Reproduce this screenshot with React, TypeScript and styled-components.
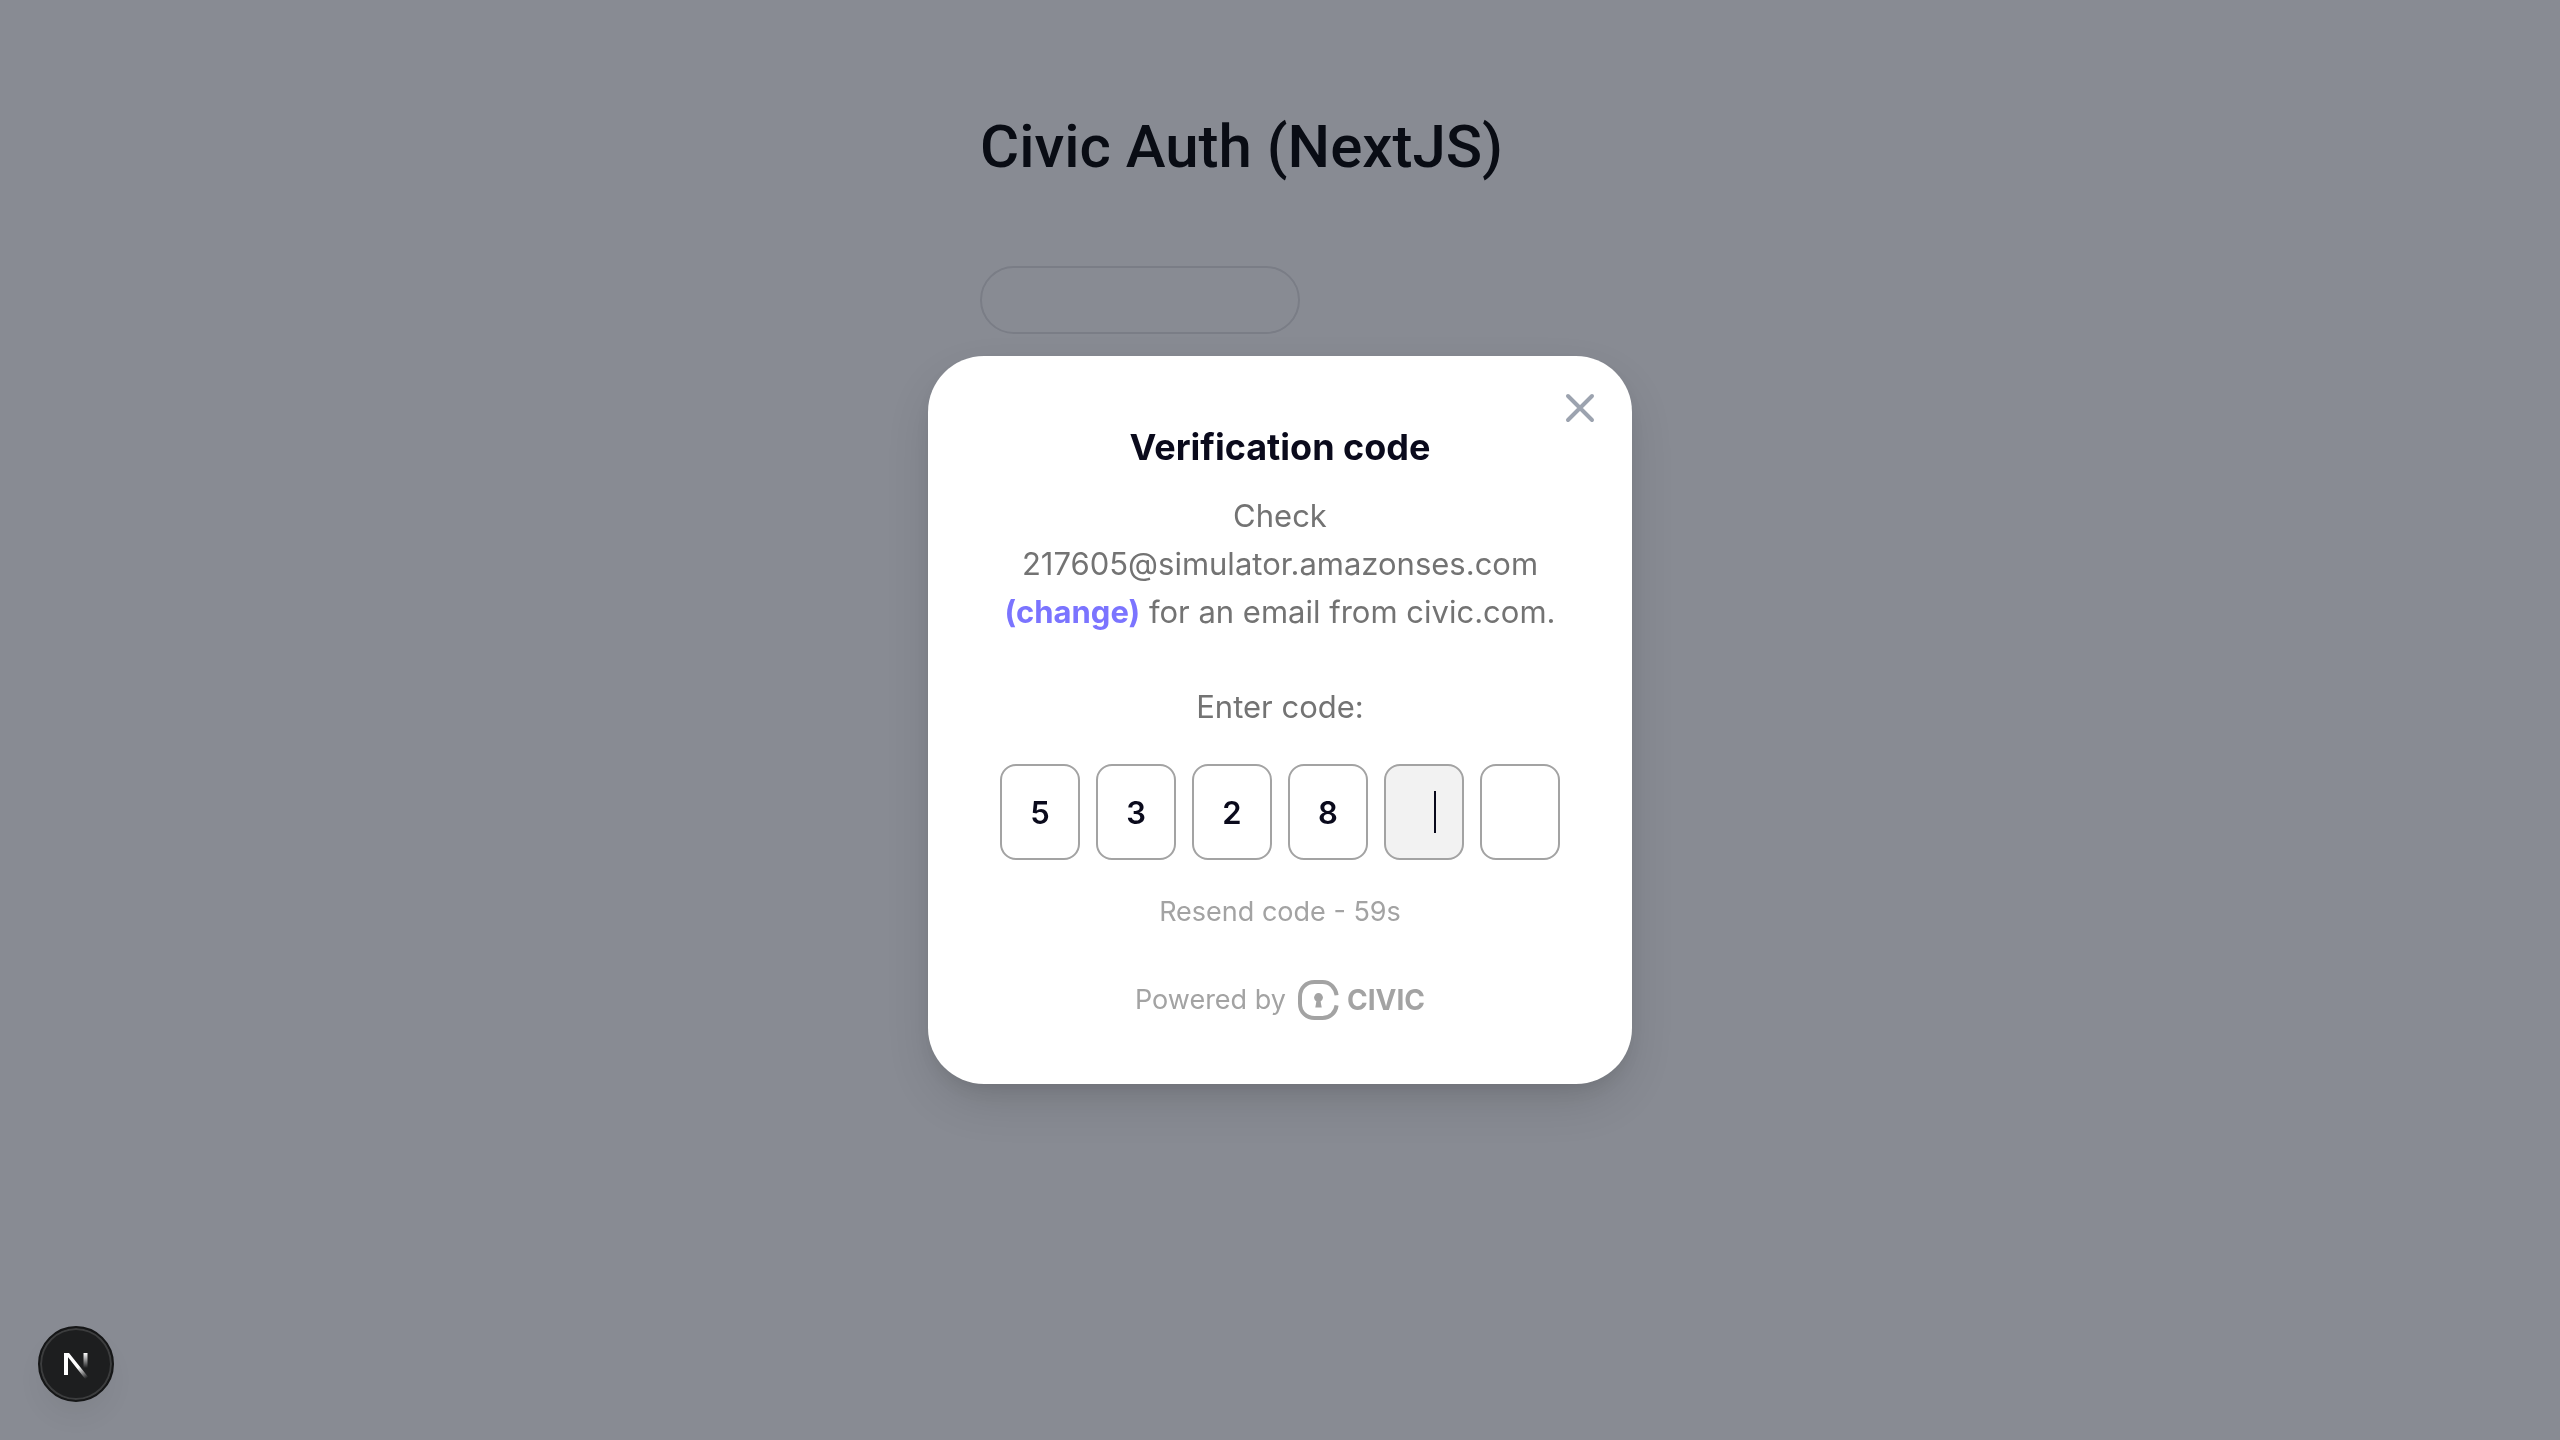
import React, { useState } from "react";
import styled, { createGlobalStyle } from "styled-components";

const GlobalStyle = createGlobalStyle`
  *, *::before, *::after { box-sizing: border-box; }
  html, body { margin: 0; background: #fff; }
  body, button, input {
    font-family: Inter, "Liberation Sans", Arial, sans-serif;
    -webkit-font-smoothing: antialiased;
  }
`;

const Page = styled.main`
  width: 100%;
  max-width: 600px;
  min-height: 100vh;
  margin: 0 auto;
  padding-top: 106px;
`;

const Heading = styled.h1`
  margin: 0 0 78px;
  font-family: Roboto, "Liberation Sans", sans-serif;
  font-size: 60px;
  line-height: 82px;
  font-weight: 500;
  color: #000;
  white-space: nowrap;
`;

const AuthButton = styled.button`
  display: block;
  width: 320px;
  height: 68px;
  border: 2px solid #e2e2e4;
  border-radius: 34px;
  background: transparent;
`;

const Scrim = styled.div`
  position: fixed;
  inset: 0;
  display: flex;
  align-items: center;
  justify-content: center;
  background: rgba(17, 24, 39, 0.5);
`;

const Card = styled.section`
  position: relative;
  width: 100%;
  max-width: 704px;
  padding: 64px 72px;
  display: flex;
  flex-direction: column;
  align-items: center;
  border-radius: 56px;
  background: #fff;
  box-shadow: 0 20px 50px -8px rgba(0, 0, 0, 0.16), 0 8px 20px -8px rgba(0, 0, 0, 0.12);
`;

const CloseButton = styled.button`
  position: absolute;
  top: 28px;
  right: 28px;
  width: 48px;
  height: 48px;
  padding: 0;
  border: 0;
  background: none;
  color: #9ca3af;
  svg { display: block; }
`;

const Title = styled.h2`
  margin: 0 0 18px;
  font-size: 36px;
  line-height: 54px;
  font-weight: 700;
  color: #0a0a1c;
`;

const Message = styled.p`
  margin: 0 0 46px;
  font-size: 31px;
  line-height: 48px;
  color: #737373;
  text-align: center;
`;

const ChangeLink = styled.a`
  color: #7b74ff;
  font-weight: 700;
  text-decoration: none;
`;

const CodeForm = styled.form`
  display: flex;
  flex-direction: column;
  align-items: center;
  gap: 32px;
`;

const CodeFields = styled.fieldset`
  margin: 0;
  padding: 0;
  border: 0;
  min-width: 0;
  display: flex;
  gap: 16px;
`;

const CodeLabel = styled.label`
  font-size: 31px;
  line-height: 50px;
  color: #737373;
`;

const Slot = styled.div`
  position: relative;
`;

const Digit = styled.input<{ $active: boolean }>`
  display: block;
  width: 80px;
  height: 96px;
  padding: 0;
  border: 2px solid #a3a3a3;
  border-radius: 16px;
  outline: none;
  background: ${(p) => (p.$active ? "#f2f2f2" : "#fff")};
  color: #0a0a1c;
  font-size: 31px;
  font-weight: 600;
  text-align: center;
  caret-color: transparent;
`;

const Caret = styled.span`
  position: absolute;
  top: 27px;
  left: 50px;
  width: 2px;
  height: 42px;
  background: #0a0a1c;
  pointer-events: none;
`;

const Resend = styled.button`
  padding: 0;
  border: 0;
  background: none;
  color: #a3a3a3;
  font-size: 27px;
  line-height: 40px;
`;

const Powered = styled.footer`
  margin-top: 48px;
  height: 40px;
  display: flex;
  align-items: center;
  font-size: 27px;
  line-height: 40px;
  color: #a3a3a3;
`;

const Brand = styled.span`
  margin-left: 12px;
  display: flex;
  align-items: center;
  gap: 8px;
  font-size: 28px;
  font-weight: 700;
  svg { display: block; }
`;

const DevBadge = styled.button`
  position: fixed;
  left: 38px;
  bottom: 38px;
  width: 76px;
  height: 76px;
  padding: 0;
  display: flex;
  align-items: center;
  justify-content: center;
  border: 2px solid #151617;
  border-radius: 50%;
  background: #1d1e1f;
  box-shadow: inset 0 0 0 2px #3c3d3e, 0 16px 32px -8px rgba(0, 0, 0, 0.08);
`;

function CloseIcon() {
  return (
    <svg width="48" height="48" viewBox="0 0 48 48" fill="none" stroke="currentColor" strokeWidth="4" strokeLinecap="round">
      <path d="M12 12 36 36M36 12 12 36" />
    </svg>
  );
}

function CivicMark() {
  return (
    <svg width="41" height="40" viewBox="0 0 41 40" fill="currentColor">
      <path
        d="M38.6 15.2C37.5 7.4 32 2 24.5 2h-8C8 2 2 8 2 16.500v7C2 32 8 38 16.500 38h8C32 38 37.500 33 38.600 25.400"
        fill="none"
        stroke="currentColor"
        strokeWidth="4"
      />
      <circle cx="20.500" cy="17.500" r="4.400" />
      <path d="M18.800 19h3.400l1.500 8.400h-6.400z" />
    </svg>
  );
}

function NextMark() {
  return (
    <svg width="28" height="30" viewBox="0 0 28 30" fill="none">
      <defs>
        <linearGradient id="diag" gradientUnits="userSpaceOnUse" x1="17" y1="18" x2="25" y2="29">
          <stop stopColor="#fff" />
          <stop offset="1" stopColor="#fff" stopOpacity="0" />
        </linearGradient>
        <linearGradient id="stem" gradientUnits="userSpaceOnUse" x1="22" y1="4" x2="22" y2="19">
          <stop stopColor="#fff" />
          <stop offset="1" stopColor="#fff" stopOpacity="0" />
        </linearGradient>
      </defs>
      <path d="M4 26V4" stroke="#fff" strokeWidth="4" />
      <path d="M2 4h5l20 25-3 2L5.500 7.500z" fill="url(#diag)" />
      <path d="M23.500 4v15" stroke="url(#stem)" strokeWidth="4" />
    </svg>
  );
}

export default function App() {
  const [digits, setDigits] = useState(["5", "3", "2", "8", "", ""]);
  const active = digits.findIndex((d) => d === "");

  const update = (index: number, value: string) =>
    setDigits(digits.map((d, i) => (i === index ? value.replace(/\D/g, "").slice(-1) : d)));

  return (
    <>
      <GlobalStyle />
      <Page>
        <Heading>Civic Auth (NextJS)</Heading>
        <AuthButton type="button" aria-label="Sign in" />
      </Page>
      <Scrim>
        <Card role="dialog" aria-modal="true" aria-labelledby="dialog-title">
          <CloseButton type="button" aria-label="Close">
            <CloseIcon />
          </CloseButton>
          <Title id="dialog-title">Verification code</Title>
          <Message>
            Check 217605@simulator.amazonses.com <ChangeLink href="#change">(change)</ChangeLink> for an email from
            civic.com.
          </Message>
          <CodeForm>
            <CodeLabel htmlFor="digit-0">Enter code:</CodeLabel>
            <CodeFields>
              {digits.map((digit, i) => (
                <Slot key={i}>
                  <Digit
                    id={`digit-${i}`}
                    aria-label={`Digit ${i + 1}`}
                    inputMode="numeric"
                    value={digit}
                    $active={i === active}
                    onChange={(e) => update(i, e.target.value)}
                  />
                  {i === active && <Caret />}
                </Slot>
              ))}
            </CodeFields>
            <Resend type="button" disabled>
              Resend code - 59s
            </Resend>
          </CodeForm>
          <Powered>
            Powered by
            <Brand>
              <CivicMark />
              CIVIC
            </Brand>
          </Powered>
        </Card>
      </Scrim>
      <DevBadge type="button" aria-label="Open Next.js Dev Tools">
        <NextMark />
      </DevBadge>
    </>
  );
}
